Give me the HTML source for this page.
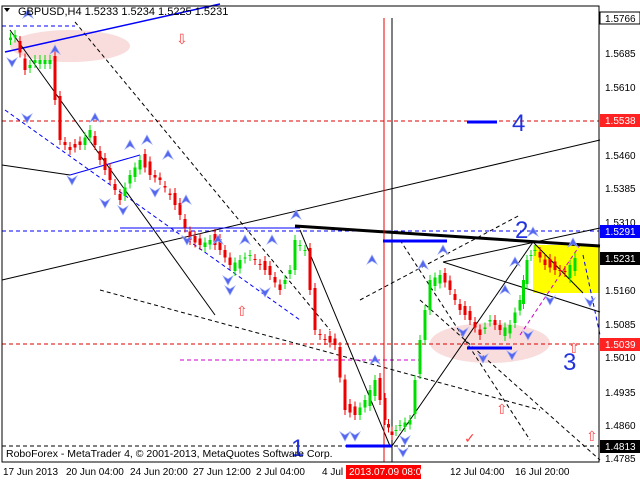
<!DOCTYPE html>
<html><head><meta charset="utf-8"><style>
body{margin:0;width:640px;height:480px;background:#fff;overflow:hidden;font-family:"Liberation Sans",sans-serif}
svg{position:absolute;left:0;top:0}
</style></head><body>
<svg id="s" width="640" height="480" xmlns="http://www.w3.org/2000/svg" font-family="Liberation Sans, sans-serif" font-size="11">
<rect x="0" y="0" width="640" height="480" fill="#fff"/>
<ellipse cx="70" cy="46" rx="60" ry="16" fill="#f9dcdc"/>
<ellipse cx="490" cy="343" rx="60" ry="20" fill="#f9dcdc"/>
<rect x="533" y="245" width="66" height="48" fill="#ffff00"/>
<g stroke-dasharray="4,3" stroke-width="1">
<line x1="2" y1="121" x2="599" y2="121" stroke="#d00"/>
<line x1="2" y1="344" x2="599" y2="344" stroke="#d00"/>
<line x1="2" y1="231" x2="599" y2="231" stroke="#00f"/>
<line x1="2" y1="446" x2="599" y2="446" stroke="#000"/>
<line x1="2" y1="26" x2="75" y2="26" stroke="#00f"/>
<line x1="75" y1="22" x2="330" y2="330" stroke="#000"/>
<line x1="5" y1="110" x2="300" y2="320" stroke="#00f"/>
<line x1="100" y1="290" x2="540" y2="410" stroke="#000"/>
<line x1="420" y1="300" x2="600" y2="460" stroke="#000"/>
<line x1="360" y1="300" x2="520" y2="215" stroke="#000"/>
<line x1="400" y1="240" x2="530" y2="440" stroke="#000"/>
<line x1="180" y1="360" x2="420" y2="360" stroke="#c0c"/>
<line x1="520" y1="335" x2="580" y2="245" stroke="#c0c"/>
<line x1="583" y1="255" x2="600" y2="335" stroke="#00f"/>
</g>
<line x1="5" y1="52" x2="220" y2="4" stroke="#00f" stroke-width="1.5"/>
<line x1="2" y1="165" x2="70" y2="175" stroke="#000"/>
<line x1="2" y1="280" x2="600" y2="140" stroke="#000"/>
<line x1="10" y1="30" x2="215" y2="315" stroke="#000"/>
<line x1="300" y1="230" x2="390" y2="446" stroke="#000"/>
<line x1="392" y1="446" x2="533" y2="242" stroke="#000"/>
<line x1="443" y1="262" x2="600" y2="312" stroke="#000"/>
<line x1="443" y1="262" x2="600" y2="228" stroke="#000"/>
<line x1="533" y1="242" x2="583" y2="293" stroke="#000"/>
<line x1="70" y1="175" x2="140" y2="155" stroke="#00f"/>
<line x1="120" y1="228" x2="300" y2="228" stroke="#00f"/>
<line x1="295" y1="226" x2="600" y2="246" stroke="#000" stroke-width="3"/>
<line x1="384" y1="18" x2="384" y2="462" stroke="#e00"/>
<line x1="392" y1="18" x2="392" y2="462" stroke="#000"/>
<g stroke="#00f" stroke-width="3">
<line x1="467" y1="122" x2="497" y2="122"/>
<line x1="383" y1="241" x2="447" y2="241"/>
<line x1="346" y1="446" x2="392" y2="446"/>
<line x1="467" y1="348" x2="512" y2="348"/>
</g>
<g id="c"></g>
<g id="f"></g>
<g fill="#2233dd" font-size="24">
<text x="291" y="456">1</text><text x="515" y="238">2</text><text x="563" y="370">3</text><text x="512" y="131">4</text>
</g>
<g fill="#f44" font-size="14"><text x="176" y="44">⇩</text><text x="236" y="316">⇧</text><text x="496" y="414">⇧</text><text x="568" y="353">⇧</text><text x="586" y="441">⇧</text><text x="464" y="443">✓</text></g>
<rect x="2" y="6" width="597" height="456" fill="none" stroke="#000"/>
<text x="18" y="15" fill="#000">GBPUSD,H4  1.5233 1.5234 1.5225 1.5231</text>
<path d="M4 8l6 0-3 4z" fill="#000"/>
<text x="6" y="457" fill="#000" font-size="10.5">RoboForex - MetaTrader 4, © 2001-2013, MetaQuotes Software Corp.</text>
<g font-size="10" fill="#000">
<text x="605" y="57">1.5685</text><text x="605" y="91">1.5610</text><text x="605" y="159">1.5460</text><text x="605" y="192">1.5385</text><text x="605" y="226">1.5310</text><text x="605" y="294">1.5160</text><text x="605" y="328">1.5085</text><text x="605" y="361">1.5010</text><text x="605" y="396">1.4935</text><text x="605" y="429">1.4860</text><text x="605" y="462">1.4785</text>
</g>
<rect x="600" y="12" width="40" height="12" fill="#fff" stroke="#000"/><text x="605" y="22" font-size="10">1.5766</text>
<rect x="600" y="114" width="40" height="13" fill="#f22"/><text x="605" y="124" font-size="10" fill="#fff">1.5538</text>
<rect x="600" y="225" width="40" height="13" fill="#00f"/><text x="605" y="235" font-size="10" fill="#fff">1.5291</text>
<rect x="600" y="252" width="40" height="13" fill="#000"/><text x="605" y="262" font-size="10" fill="#fff">1.5231</text>
<rect x="600" y="338" width="40" height="13" fill="#f22"/><text x="605" y="348" font-size="10" fill="#fff">1.5039</text>
<rect x="600" y="440" width="40" height="13" fill="#000"/><text x="605" y="450" font-size="10" fill="#fff">1.4813</text>
<g font-size="10" fill="#000"><text x="3" y="475">17 Jun 2013</text><text x="66" y="475">20 Jun 04:00</text><text x="130" y="475">24 Jun 20:00</text><text x="193" y="475">27 Jun 12:00</text><text x="256" y="475">2 Jul 04:00</text><text x="322" y="475">4 Jul</text><text x="410" y="475">00</text><text x="450" y="475">12 Jul 04:00</text><text x="515" y="475">16 Jul 20:00</text></g>
<rect x="346" y="465" width="75" height="14" fill="#f00"/><text x="349" y="475" font-size="10" fill="#fff">2013.07.09 08:00</text>
</svg>
<script>
var pts=[[6,40],[15,35],[25,70],[35,60],[50,60],[60,140],[70,150],[80,145],[90,130],[100,160],[110,180],[120,200],[130,175],[140,160],[150,175],[160,180],[170,195],[180,215],[190,240],[200,245],[210,240],[220,250],[230,265],[240,260],[250,255],[260,265],[270,275],[280,290],[290,270],[295,240],[305,250],[315,330],[325,340],[335,345],[345,410],[355,415],[365,400],[375,380],[385,420],[392,435],[400,425],[410,420],[420,340],[430,280],[440,275],[450,290],[460,310],[470,320],[480,335],[490,320],[500,330],[510,325],[520,300],[527,260],[535,250],[545,265],[555,270],[565,272],[575,258]];
var g=document.getElementById('c'),h='';
for(var i=1;i<pts.length;i++){var a=pts[i-1],b=pts[i],n=Math.max(1,Math.round((b[0]-a[0])/4.5));
for(var k=1;k<=n;k++){var x=a[0]+(b[0]-a[0])*k/n,o=a[1]+(b[1]-a[1])*(k-1)/n+((k*7+i*3)%7-3)*2,c=a[1]+(b[1]-a[1])*k/n;
var up=c<o,t=Math.min(o,c),bt=Math.max(o,c);if(bt-t<1)bt=t+1;var col=up?'#00dd00':'#ee0000';
h+='<line x1="'+x+'" y1="'+(t-5)+'" x2="'+x+'" y2="'+(bt+5)+'" stroke="'+col+'"/><rect x="'+(x-1.5)+'" y="'+t+'" width="3" height="'+(bt-t)+'" fill="'+col+'"/>';}}
g.innerHTML=h;
var up=[[28,14],[55,50],[95,118],[130,145],[147,140],[168,155],[186,200],[218,240],[245,240],[272,240],[296,215],[372,260],[423,265],[443,250],[533,232],[515,262],[573,243],[505,290],[375,360]];
var dn=[[12,62],[27,118],[72,180],[105,203],[123,210],[155,192],[187,240],[228,280],[345,436],[355,436],[403,452],[463,332],[483,358],[512,355],[528,335],[550,300],[590,302],[405,440],[230,290],[265,292]];
var s='';
up.forEach(function(p){s+='<path d="M'+(p[0]-5)+' '+(p[1]+4)+'L'+p[0]+' '+(p[1]-5)+'L'+(p[0]+5)+' '+(p[1]+4)+'L'+p[0]+' '+(p[1]+1)+'Z" fill="#5566ee" stroke="#99aaff" stroke-width="0.7"/>';});
dn.forEach(function(p){s+='<path d="M'+(p[0]-5)+' '+(p[1]-4)+'L'+p[0]+' '+(p[1]+5)+'L'+(p[0]+5)+' '+(p[1]-4)+'L'+p[0]+' '+(p[1]-1)+'Z" fill="#5566ee" stroke="#99aaff" stroke-width="0.7"/>';});
document.getElementById('f').innerHTML=s;
</script>
</body></html>
